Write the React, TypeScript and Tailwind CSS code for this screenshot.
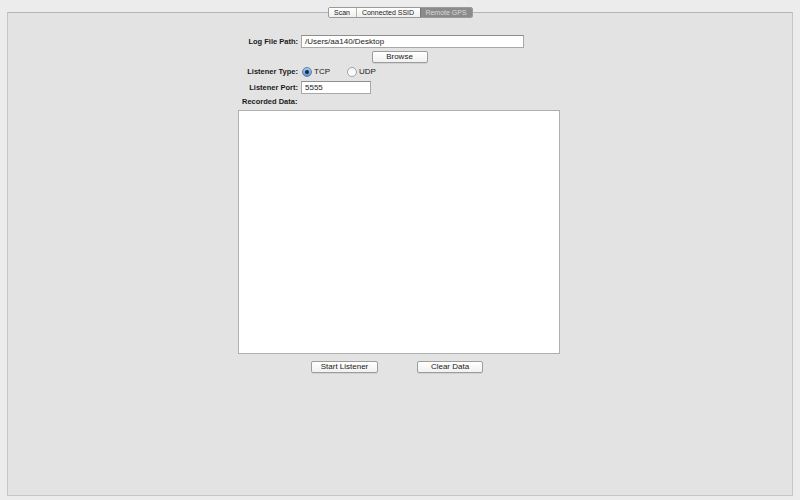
import React from 'react';

const font = { fontFamily: '"Liberation Sans", Arial, sans-serif' };

function Radio({ checked, label }: { checked?: boolean; label: string }) {
  return (
    <label className="flex items-center gap-[2px] text-[8px] text-[#1a1a1a]">
      <span
        className={
          checked
            ? 'flex h-[10px] w-[10px] items-center justify-center rounded-full border border-[#5a7fb0] bg-gradient-to-b from-[#a9c8ee] to-[#5b96dc]'
            : 'h-[10px] w-[10px] rounded-full border border-[#a3a3a3] bg-gradient-to-b from-[#f4f4f4] to-[#ffffff]'
        }
      >
        {checked && <span className="h-[4px] w-[4px] rounded-full bg-[#1d2a3c]" />}
      </span>
      {label}
    </label>
  );
}

function Button({ children, className }: { children: React.ReactNode; className: string }) {
  return (
    <button
      className={
        'flex h-[12px] items-center justify-center rounded-[2px] border border-[#9d9d9d] bg-gradient-to-b from-[#ffffff] to-[#f1f1f1] text-[8px] leading-none text-[#1a1a1a] shadow-[0_1px_0_rgba(0,0,0,0.08)] ' +
        className
      }
    >
      {children}
    </button>
  );
}

export default function App() {
  return (
    <div className="flex h-[500px] w-[800px] flex-col bg-[#ececec]" style={font}>
      {/* tabs */}
      <div className="relative z-10 mb-[-6px] mt-[7px] flex justify-center">
        <div className="flex h-[11px] overflow-hidden rounded-[2px] border border-[#9a9a9a] text-[7px] leading-none">
          <div className="flex w-[27px] items-center justify-center bg-gradient-to-b from-[#ffffff] to-[#efefef] text-[#1a1a1a]">
            Scan
          </div>
          <div className="flex w-[64px] items-center justify-center border-l border-[#b5b5b5] bg-gradient-to-b from-[#ffffff] to-[#efefef] text-[#1a1a1a]">
            Connected SSID
          </div>
          <div className="flex w-[52px] items-center justify-center border-l border-[#777] bg-[#8b8b8b] text-[#d9d9d9]">
            Remote GPS
          </div>
        </div>
      </div>

      {/* panel */}
      <div className="mx-[7px] mb-[4px] flex flex-1 justify-center border border-[#c6c6c6] border-t-[#b4b4b4] bg-[#e3e3e3] pr-[2px]">
        <div className="mt-[22px] flex w-[322px] flex-col">
          <div className="flex h-[13px] items-center">
            <span className="w-[60px] text-right text-[7.5px] font-bold text-[#1a1a1a]">Log File Path:</span>
            <div className="ml-[3px] flex h-[13px] w-[223px] items-center border border-[#a8a8a8] border-t-[#8e8e8e] bg-white pl-[3px] text-[8px] text-[#1a1a1a]">
              /Users/aa140/Desktop
            </div>
          </div>
          <div className="mt-[3px] flex justify-center pl-[1px]">
            <Button className="w-[56px]">Browse</Button>
          </div>
          <div className="mt-[3px] flex h-[12px] items-center">
            <span className="w-[60px] text-right text-[7.5px] font-bold text-[#1a1a1a]">Listener Type:</span>
            <div className="ml-[4px] flex gap-[17px]">
              <Radio checked label="TCP" />
              <Radio label="UDP" />
            </div>
          </div>
          <div className="mt-[3px] flex h-[13px] items-center">
            <span className="w-[60px] text-right text-[7.5px] font-bold text-[#1a1a1a]">Listener Port:</span>
            <div className="ml-[3px] flex h-[13px] w-[70px] items-center border border-[#a8a8a8] border-t-[#8e8e8e] bg-white pl-[3px] text-[8px] text-[#1a1a1a]">
              5555
            </div>
          </div>
          <div className="mt-[3px] pl-[4px] text-[7.5px] font-bold leading-[10px] text-[#1a1a1a]">Recorded Data:</div>
          <div className="mt-[3px] h-[244px] w-[322px] border border-[#b0b0b0] bg-white" />
          <div className="mt-[7px] flex pl-[73px]">
            <Button className="w-[67px]">Start Listener</Button>
            <Button className="ml-[39px] w-[66px]">Clear Data</Button>
          </div>
        </div>
      </div>
    </div>
  );
}
